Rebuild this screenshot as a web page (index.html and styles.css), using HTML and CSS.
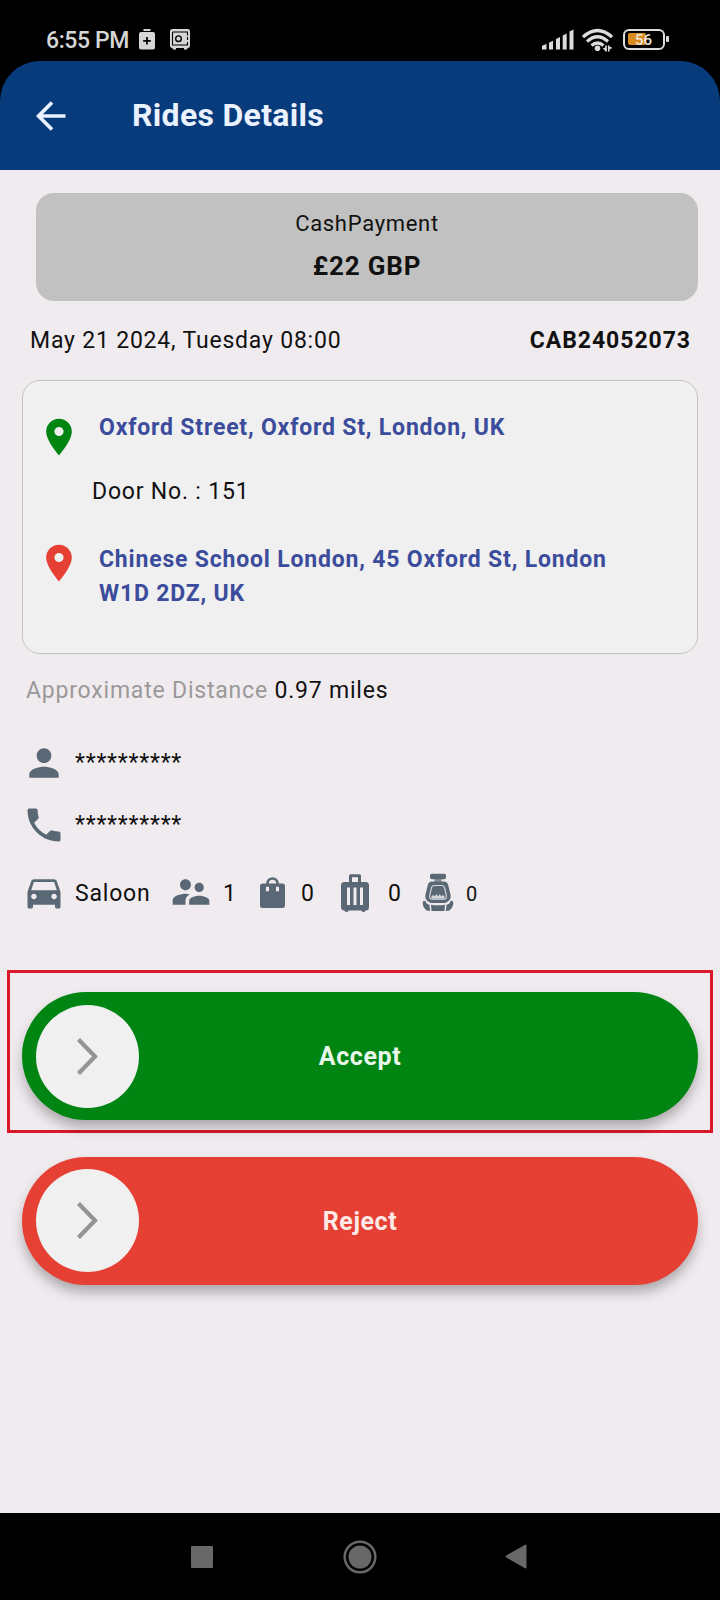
FILE: index.html
```html
<!DOCTYPE html>
<html lang="en">
<head>
<meta charset="utf-8">
<title>Rides Details</title>
<link rel="stylesheet" href="styles.css">
</head>
<body>
<div class="status">
  <span class="clock">6:55 PM</span>
  <svg class="st-saver" width="16" height="21" viewBox="0 0 16 21"><path fill="#d6d6d6" d="M4.500 0h7v2h-7zM2 3h12q2 0 2 2v13.500q0 2-2 2H2q-2 0-2-2V5q0-2 2-2z"/><path stroke="#000" stroke-width="1.700" d="M4.200 11.800h7.600M8 8v7.600"/></svg>
  <svg class="st-safe" width="20" height="21" viewBox="0 0 20 21"><rect x=".7" y=".7" width="18.600" height="17.600" rx="1.500" fill="#d6d6d6" stroke="#d6d6d6" stroke-width="1.400"/><path d="M2.500 3h15v3.500M2.500 3v13h15v-3M17.500 8v3" fill="none" stroke="#000" stroke-width="1.100"/><circle cx="8.500" cy="9.700" r="2.800" fill="none" stroke="#000" stroke-width="1.400"/><path fill="#d6d6d6" d="M2 18h4v2.500H3zM14 18h4l-1 2.500h-3z"/></svg>
  <div class="st-right">
    <svg width="32" height="21" viewBox="0 0 32 21" fill="#dcdcdc"><path d="M0 20.500v-3.200q0-.8 1-1.100l3.500-1.200v5.500zM7 20.500v-6.700l4-2v8.700zM14 20.500V10l4-2v12.500zM20.700 20.500V6.500l4-2v16zM27.500 20.500V2.500l4-2v20z"/></svg>
    <svg class="st-wifi" width="31" height="24" viewBox="0 0 31 24"><g fill="none" stroke="#dcdcdc" stroke-width="3.200"><path d="M1 9q14.500-13 29 0"/><path d="M5 13.500q10.500-9.500 21 0"/><path d="M9.500 17.500q6-5 12 0"/></g><circle cx="15.500" cy="20.300" r="2.800" fill="#dcdcdc"/><path stroke="#dcdcdc" stroke-width="1.700" d="M24 17.500v6M26.800 17.500v6M21.500 20l2.500 2.500M29.500 20.500l-2.700-2"/></svg>
    <div class="battery"><i class="charge"></i><span class="pct">56</span></div><i class="nub"></i>
  </div>
</div>
<header class="bar">
  <svg class="back" width="30" height="30" viewBox="0 0 30 30" fill="none" stroke="#eaf2ff" stroke-width="3.700"><path d="M29.500 15H3M16 1.500 2.500 15 16 28.500"/></svg>
  <h1 class="title">Rides Details</h1>
</header>
<main class="main">
  <section class="pay"><div class="method">CashPayment</div><div class="amount">£22 GBP</div></section>
  <div class="meta"><span class="date">May 21 2024, Tuesday 08:00</span><b class="ref">CAB24052073</b></div>
  <section class="trip">
    <div class="stop from"><svg class="pin" viewBox="0 0 24 24" fill="#008512"><path d="M12 2C8.130 2 5 5.130 5 9c0 5.250 7 13 7 13s7-7.750 7-13c0-3.870-3.130-7-7-7zm0 9.500a2.500 2.500 0 1 1 0-5 2.500 2.500 0 0 1 0 5z"/></svg><span class="addr">Oxford Street, Oxford St, London, UK</span></div>
    <div class="door">Door No. : 151</div>
    <div class="stop to"><svg class="pin" viewBox="0 0 24 24" fill="#e64035"><path d="M12 2C8.130 2 5 5.130 5 9c0 5.250 7 13 7 13s7-7.750 7-13c0-3.870-3.130-7-7-7zm0 9.500a2.500 2.500 0 1 1 0-5 2.500 2.500 0 0 1 0 5z"/></svg><span class="addr">Chinese School London, 45 Oxford St, London<br>W1D 2DZ, UK</span></div>
  </section>
  <div class="distance"><span class="muted">Approximate Distance</span> 0.97 miles</div>
  <div class="row person"><svg class="ic" viewBox="0 0 24 24"><path d="M12 12c2.210 0 4-1.790 4-4s-1.790-4-4-4-4 1.790-4 4 1.790 4 4 4zm0 2c-2.670 0-8 1.340-8 4v2h16v-2c0-2.660-5.330-4-8-4z"/></svg><span class="mask">**********</span></div>
  <div class="row phone"><svg class="ic" viewBox="0 0 24 24"><path d="M6.620 10.790c1.440 2.830 3.760 5.140 6.590 6.590l2.200-2.200c.27-.27.67-.36 1.020-.24 1.120.37 2.330.57 3.570.57.55 0 1 .45 1 1V20c0 .55-.45 1-1 1-9.390 0-17-7.610-17-17 0-.55.45-1 1-1h3.500c.55 0 1 .45 1 1 0 1.250.2 2.450.57 3.570.11.35.03.74-.25 1.020l-2.200 2.200z"/></svg><span class="mask">**********</span></div>
  <div class="row car">
    <svg class="ic" viewBox="0 0 24 24"><path d="M18.920 6.010C18.720 5.420 18.160 5 17.500 5h-11c-.66 0-1.210.42-1.420 1.010L3 12v8c0 .55.45 1 1 1h1c.55 0 1-.45 1-1v-1h12v1c0 .55.45 1 1 1h1c.55 0 1-.45 1-1v-8l-2.080-5.990zM6.500 16c-.83 0-1.500-.67-1.500-1.500S5.670 13 6.500 13s1.500.67 1.500 1.500S7.330 16 6.500 16zm11 0c-.83 0-1.500-.67-1.500-1.500s.67-1.500 1.500-1.500 1.500.67 1.500 1.500-.67 1.500-1.500 1.500zM5 11l1.500-4.500h11L19 11H5z"/></svg><span class="type">Saloon</span>
    <svg class="ic" viewBox="0 0 24 24"><path d="M16.500 12c1.380 0 2.490-1.120 2.490-2.500S17.880 7 16.500 7C15.120 7 14 8.120 14 9.500s1.120 2.500 2.500 2.500zM9 11c1.660 0 2.990-1.340 2.990-3S10.660 5 9 5C7.340 5 6 6.340 6 8s1.340 3 3 3zm7.500 3c-1.830 0-5.500.92-5.500 2.750V19h11v-2.250c0-1.830-3.670-2.750-5.500-2.750zM9 13c-2.330 0-7 1.170-7 3.500V19h7v-2.250c0-.85.33-2.340 2.370-3.470C10.500 13.100 9.660 13 9 13z"/></svg><span class="n pax">1</span>
    <svg class="bag" width="25" height="32" viewBox="0 0 25 32"><path d="M7.500 9V6.500a5 5 0 0 1 10 0V9" fill="none" stroke="#596874" stroke-width="2.700"/><path fill="#596874" fill-rule="evenodd" d="M2.500 6.500h20q2.500 0 2.500 2.500V28.500q0 2.500-2.500 2.500h-20Q0 31 0 28.500V9q0-2.500 2.500-2.500zM6 9.800v4.500h3V9.800zM16 9.800v4.500h3V9.800z"/></svg><span class="n bags">0</span>
    <svg class="case" width="28" height="39" viewBox="0 0 28 39"><path d="M9.500 9V1.700h9V9" fill="none" stroke="#596874" stroke-width="3" stroke-linejoin="round"/><path fill="#596874" fill-rule="evenodd" d="M3.500 8h21Q28 8 28 11.500V33q0 3.500-3.500 3.500V37q-2 2-4 0v-.5h-13v.5q-2 2-4 0v-.5Q0 36.500 0 33V11.500Q0 8 3.500 8zM6 13.500V31h3V13.500zM12.500 13.500V31h3V13.500zM19 13.500V31h3V13.500z"/></svg><span class="n cases">0</span>
    <svg class="seat" width="32" height="38" viewBox="0 0 32 38" fill="#596874"><rect x="8" y=".8" width="16" height="5.400" rx="1.800"/><path d="M12.500 6h7v3h-7z" opacity=".7"/><path d="M10 8.500h12q3.500 0 4.300 4l2.200 9q.9 5-3 7.200-2 1.300-3 1.300H9.500q-1 0-3-1.300-4-2.200-3-7.200l2.200-9q.8-4 4.300-4z"/><path d="M12 12.500h8q2 0 2.600 2.300l1.600 7q.8 4-2 4.400H9.800q-2.800-.4-2-4.400l1.600-7q.6-2.300 2.600-2.300z" fill="none" stroke="#d5d8dc" stroke-width="1.200"/><path d="M9.500 25.500v-2.200l1.700-1.300 1.500 1.500 1.500-2.500 1.800 2.500 1.800-2.500 1.500 2.500 1.500-1.500 1.700 1.300v2.200z" fill="#d5d8dc"/><path d="M9 31.800q7 1 14 0L22.500 38h-13zM1 28.300l2.300-.5q.8 3.300 4.200 3.900l.6 6.300-3.500-.5Q-.3 33 1 28.300zM31 28.300l-2.300-.5q-.8 3.300-4.200 3.900l-.6 6.300 3.500-.5q4.900-4.500 3.600-9.200z"/></svg><span class="n seats">0</span>
  </div>
  <div class="frame"><div class="slide accept"><div class="knob"><svg width="22" height="38" viewBox="0 0 22 38" fill="none" stroke="#949494" stroke-width="4.200"><path d="M1.500 1.500 18 18.500 1.500 35.500"/></svg></div><span class="label">Accept</span></div></div>
  <div class="slide reject"><div class="knob"><svg width="22" height="38" viewBox="0 0 22 38" fill="none" stroke="#949494" stroke-width="4.200"><path d="M1.500 1.500 18 18.500 1.500 35.500"/></svg></div><span class="label">Reject</span></div>
</main>
<nav class="nav">
  <svg width="22" height="22"><rect width="22" height="22" rx="1" fill="#686868"/></svg>
  <svg class="home" width="34" height="34"><circle cx="17" cy="17" r="15.300" fill="none" stroke="#686868" stroke-width="2.500"/><circle cx="17" cy="17" r="11.500" fill="#686868"/></svg>
  <svg width="22" height="25"><path d="M20.500 1.500v22L1.500 12.500z" fill="#686868" stroke="#686868" stroke-width="2" stroke-linejoin="round"/></svg>
</nav>
</body>
</html>
```
FILE: styles.css
```css
* { box-sizing: border-box; }
body { margin: 0; width: 720px; height: 1600px; background: #000; font-family: Roboto, "Liberation Sans", sans-serif; color: #111; display: flex; flex-direction: column; overflow: hidden; }
svg { display: block; flex: none; }
.status { height: 61px; padding: 29px 51px 0 46px; display: flex; align-items: flex-start; color: #d6d6d6; }
.clock { width: 93px; font-size: 23px; line-height: 23px; font-weight: 500; letter-spacing: -.4px; white-space: nowrap; }
.st-safe { margin-left: 15px; }
.st-right { margin-left: auto; display: flex; align-items: flex-start; }
.st-wifi { margin: -1px 10px 0 8px; }
.battery { position: relative; width: 42px; height: 21px; border: 2.500px solid #dcdcdc; border-radius: 6px; }
.charge { position: absolute; left: 3px; top: 2px; width: 18px; height: 12px; border-radius: 2px; background: #d98c1f; }
.pct { position: absolute; left: 10px; top: 1px; font-size: 15px; line-height: 16px; font-weight: 500; color: #f0e6d8; }
.nub { width: 3px; height: 6px; margin: 7px 0 0 1px; background: #dcdcdc; border-radius: 1px; }
.bar { height: 109px; flex: none; background: #083b7b; border-radius: 40px 40px 0 0; display: flex; align-items: center; padding: 0 0 0 36px; }
.back { margin-top: 1px; }
.title { margin: -2px 0 0 66px; font-size: 32px; line-height: 38px; font-weight: 700; letter-spacing: .3px; color: #eaf2ff; white-space: nowrap; }
.main { height: 1343px; flex: none; background: #f0ebef; padding: 23px 22px 0; }
.pay { margin-left: 14px; height: 108px; background: #c1c1c1; border-radius: 18px; padding-top: 17px; text-align: center; }
.method { font-size: 22px; line-height: 28px; letter-spacing: .7px; }
.amount { font-size: 26px; line-height: 32px; margin-top: 12px; font-weight: 700; letter-spacing: .8px; }
.meta { height: 79px; padding: 26px 7px 0 8px; display: flex; justify-content: space-between; font-size: 23px; line-height: 28px; letter-spacing: .8px; }
.ref { letter-spacing: .95px; }
.trip { height: 274px; border: 1.500px solid #c2c4c4; border-radius: 18px; background: #f0f0f0; padding: 29px 0 0 14px; }
.stop { display: flex; font-size: 23px; line-height: 34.500px; font-weight: 700; letter-spacing: .81px; color: #3c4c9c; white-space: nowrap; }
.pin { width: 44px; height: 44px; margin: 5px 18px 0 0; }
.addr { padding-top: .6px; }
.to .pin { margin-top: -1px; }
.to { margin-top: 33px; }
.door { margin: 16px 0 0 55px; font-size: 23px; line-height: 34px; letter-spacing: .8px; }
.distance { height: 87px; padding: 23px 0 0 4px; font-size: 23px; line-height: 28px; letter-spacing: .8px; }
.muted { color: #999; }
.row { display: flex; align-items: center; height: 44px; font-size: 23px; line-height: 28px; letter-spacing: .8px; }
.ic { width: 44px; height: 44px; fill: #596874; }
.phone { margin-top: 18px; }
.car { margin-top: 23px; }
.mask { margin-left: 9px; }
.type { margin: 3px 0 0 9px; width: 94px; }
.n { padding-top: 3px; }
.bag, .case { margin-top: 2px; }
.pax { margin-left: 10px; width: 37px; }
.bags { margin-left: 16px; width: 40px; }
.cases { margin-left: 19px; width: 34px; }
.seats { margin-left: 12px; font-size: 20px; }
.frame { margin: 56px -15px 0; height: 163px; border: 3px solid #d9182a; padding: 19px 12px 0; }
.slide { position: relative; height: 128px; border-radius: 64px; padding: 12.500px 14px; box-shadow: 0 8px 13px -1px rgba(0,0,0,.3); }
.accept { background: #008512; }
.reject { margin-top: 23.500px; background: #e64035; }
.knob { width: 103px; height: 103px; border-radius: 50%; background: #f0f0f0; padding: 33px 0 0 41px; }
.label { position: absolute; inset: 0; text-align: center; line-height: 129px; font-size: 25px; font-weight: 700; letter-spacing: .6px; color: #e9f6ea; }
.reject .label { color: #fdeae7; }
.nav { height: 87px; flex: none; display: flex; align-items: center; justify-content: space-between; padding: 0 193px 0 191px; }
.home { margin-left: 2px; }
```
